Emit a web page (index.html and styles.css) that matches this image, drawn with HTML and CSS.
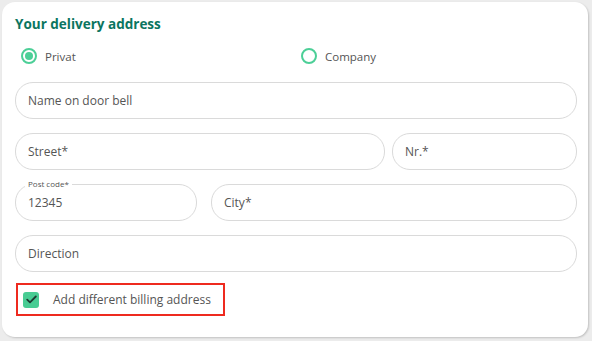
FILE: index.html
```html
<!DOCTYPE html>
<html lang="en">
  <head>
    <meta charset="UTF-8">
    <title>Delivery address</title>
    <link rel="stylesheet" href="styles.css">
  </head>
  <body>
    <main class="card">
      <h2 class="title">Your delivery address</h2>
      <div class="radios">
        <label class="radio checked"><span class="dot"></span>Privat</label>
        <label class="radio"><span class="dot"></span>Company</label>
      </div>
      <div class="row">
        <div class="field">Name on door bell</div>
      </div>
      <div class="row street">
        <div class="field">Street*</div>
        <div class="field">Nr.*</div>
      </div>
      <div class="row city">
        <div class="field filled"><span class="legend">Post code*</span>12345</div>
        <div class="field">City*</div>
      </div>
      <div class="row">
        <div class="field">Direction</div>
      </div>
      <div class="billing">
        <span class="box">
          <svg width="11" height="9" viewBox="0 0 11 9"><path d="M1.2 4.6 L4 7.3 L9.8 1.5" fill="none" stroke="#1d3b33" stroke-width="1.8" stroke-linecap="round" stroke-linejoin="round"/></svg>
        </span>
        Add different billing address
      </div>
    </main>
  </body>
</html>
```

FILE: styles.css
```css
body {
  margin: 0;
  background: #ececec;
  font-family: "Open Sans", sans-serif;
  color: #444;
}

.card {
  margin: 2px 4px 4px 2px;
  height: 335px;
  box-sizing: border-box;
  background: #fff;
  border-radius: 13px;
  box-shadow: 1px 1px 2px rgba(0, 0, 0, 0.18);
  padding: 13px 11px 0 13px;
}

.title {
  margin: 0;
  font-size: 13.5px;
  font-weight: 700;
  color: #0b7560;
  line-height: 18px;
}

.radios {
  display: grid;
  grid-template-columns: 280px 1fr;
  margin: 12px 0 0 6px;
  height: 22px;
}

.radio {
  display: flex;
  align-items: center;
  gap: 8px;
  font-size: 11.5px;
  color: #555;
}

.dot {
  width: 12px;
  height: 12px;
  border: 2px solid #4ccf97;
  border-radius: 50%;
  position: relative;
}

.checked .dot::after {
  content: "";
  position: absolute;
  left: 2px;
  top: 2px;
  width: 8px;
  height: 8px;
  border-radius: 50%;
  background: #4ccf97;
}

.row {
  display: grid;
  grid-template-columns: 1fr;
  margin-top: 14px;
}

.radios + .row {
  margin-top: 15px;
}

.street {
  grid-template-columns: 370px 1fr;
  column-gap: 7px;
}

.city {
  grid-template-columns: 182px 1fr;
  column-gap: 14px;
}

.field {
  height: 37px;
  box-sizing: border-box;
  border: 1px solid #dadada;
  border-radius: 18px;
  padding: 0 12px;
  display: flex;
  align-items: center;
  font-size: 12px;
  color: #555;
  position: relative;
}

.legend {
  position: absolute;
  top: -7px;
  left: 9px;
  background: #fff;
  padding: 0 3px;
  font-size: 8px;
  line-height: 12px;
}

.billing {
  margin: 11px 0 0 1px;
  width: 209px;
  height: 33px;
  box-sizing: border-box;
  border: 2px solid #ee2a1f;
  display: flex;
  align-items: center;
  padding-left: 5px;
  gap: 14px;
  font-size: 12px;
  color: #555;
}

.box {
  width: 16px;
  height: 16px;
  border-radius: 3px;
  background: #48cc93;
  display: flex;
  align-items: center;
  justify-content: center;
}
```
